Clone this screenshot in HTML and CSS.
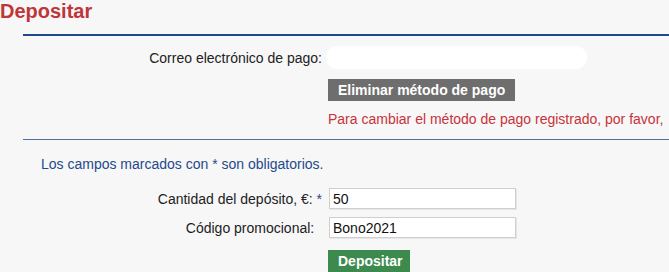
FILE: index.html
```html
<!DOCTYPE html>
<html lang="es">

<head>
    <meta charset="UTF-8">
    <meta name="viewport" content="width=device-width, initial-scale=1.0">
    <title>Depositar</title>
    <link rel="stylesheet" href="styles.css">
</head>

<body>
    <h1 class="page-title">Depositar</h1>

    <div class="section">
        <div class="form-row">
            <label class="form-label">Correo electrónico de pago:</label>
            <div class="form-value"><span class="pill-field"></span></div>
        </div>
        <div class="form-row">
            <span></span>
            <div class="form-value"><button class="btn btn-gray">Eliminar método de pago</button></div>
        </div>
        <div class="form-row">
            <span></span>
            <div class="form-value warn-text">Para cambiar el método de pago registrado, por favor,</div>
        </div>
    </div>

    <div class="section section-thin">
        <p class="required-note">Los campos marcados con * son obligatorios.</p>
        <div class="form-row">
            <label class="form-label" for="amount">Cantidad del depósito, €: <span class="star">*</span></label>
            <div class="form-value"><input class="text-input" id="amount" type="text" value="50"></div>
        </div>
        <div class="form-row row-spaced">
            <label class="form-label" for="promo">Código promocional:&nbsp;&nbsp;</label>
            <div class="form-value"><input class="text-input" id="promo" type="text" value="Bono2021"></div>
        </div>
        <div class="form-row">
            <span></span>
            <div class="form-value"><button class="btn btn-green">Depositar</button></div>
        </div>
    </div>
</body>

</html>
```

FILE: styles.css
```css
body {
    font-family: "Liberation Sans", Arial, sans-serif;
    font-size: 14px;
    background-color: #f7f7f7;
    color: #222222;
    margin: 0;
    overflow: hidden;
}

.page-title {
    margin: 0;
    font-size: 20px;
    line-height: 22px;
    color: #c0353a;
}

.section {
    margin: 12px 0 0 23px;
    border-top: 2px solid #1f4a8a;
    padding-top: 10px;
}

.section-thin {
    margin-top: 11px;
    border-top: 1px solid #4f6f9f;
    padding-top: 16px;
}

.form-row {
    display: grid;
    grid-template-columns: 299px 1fr;
    column-gap: 6px;
    align-items: center;
    white-space: nowrap;
}

.row-spaced {
    margin-top: 8px;
}

.form-label {
    text-align: right;
}

.form-value {
    min-width: 0;
}

.pill-field {
    display: block;
    width: 261px;
    height: 23px;
    margin-left: -2px;
    background-color: #ffffff;
    border-radius: 12px;
}

.btn {
    font-family: inherit;
    font-size: 14px;
    font-weight: bold;
    color: #ffffff;
    height: 22px;
    padding: 0 10px;
    border: none;
    display: block;
    cursor: pointer;
}

.btn-gray {
    margin-top: 10px;
    width: 187px;
    background-color: #6e6e6e;
}

.btn-green {
    margin-top: 12px;
    width: 82px;
    background-color: #3d8a4f;
}

.warn-text {
    color: #c8323a;
    line-height: 17px;
    margin-top: 10px;
}

.required-note {
    margin: 0 0 15px 18px;
    line-height: 17px;
    color: #1f4a8a;
}

.star {
    color: #1f4a8a;
}

.text-input {
    display: block;
    box-sizing: border-box;
    width: 187px;
    height: 21px;
    margin-left: 1px;
    padding: 0 3px;
    font-family: inherit;
    font-size: 14px;
    color: #111111;
    background-color: #ffffff;
    border: 1px solid #cfcfcf;
    box-shadow: 1px 1px 0 #e6e6e6;
    outline: none;
}
```
